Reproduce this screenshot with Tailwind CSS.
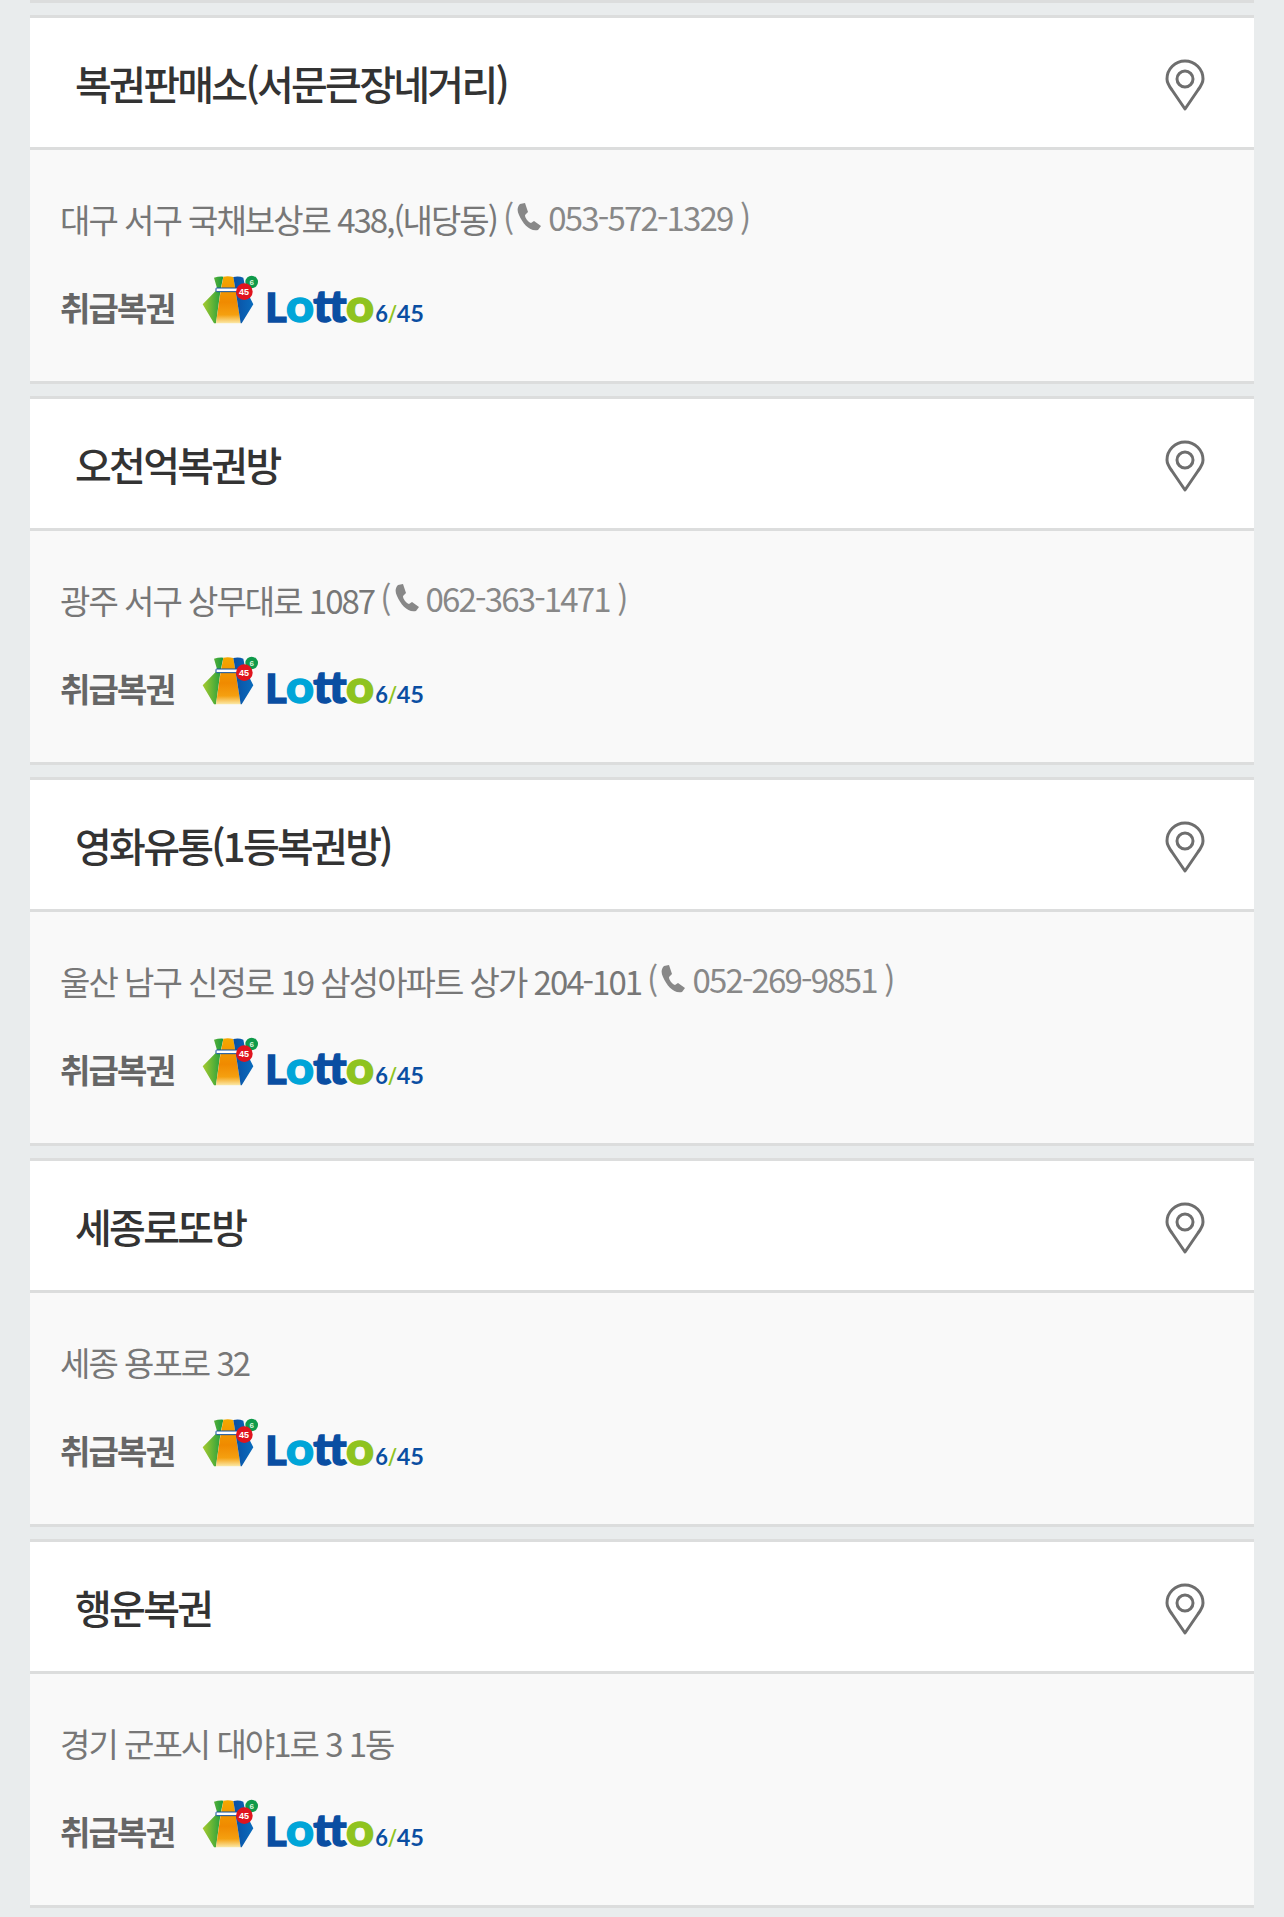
<!doctype html>
<html lang="ko">
<head>
<meta charset="utf-8">
<script src="https://cdn.jsdelivr.net/npm/@tailwindcss/browser@4"></script>
</head>
<body class="m-0 bg-[#e9eced] overflow-hidden">
<svg class="absolute w-0 h-0" aria-hidden="true">
  <defs>
    <linearGradient id="gg" x1="0" y1="0" x2="1" y2="0"><stop offset="0" stop-color="#a8cb2f"/><stop offset="1" stop-color="#169a3e"/></linearGradient>
    <linearGradient id="og" x1="0" y1="0" x2="0" y2="1"><stop offset="0" stop-color="#f4a800"/><stop offset=".55" stop-color="#f08a00"/><stop offset=".82" stop-color="#f5a010"/><stop offset="1" stop-color="#fbe9a8"/></linearGradient>
    <linearGradient id="bg" x1="0" y1="0" x2="1" y2="0"><stop offset="0" stop-color="#0b4fa3"/><stop offset="1" stop-color="#0a6cbd"/></linearGradient>
    <symbol id="logo" viewBox="0 0 750 240">
      <path d="M72 50 Q86 46 100 47 L92 85 L78 187 L72 187 L38 130 L82 85Z" fill="url(#gg)"/>
      <path d="M100 47 Q115 44 130 48 L137 90 L152 187 L78 187 L92 90Z" fill="url(#og)"/>
      <path d="M130 48 Q146 44 160 50 L167 85 L190 130 L155 187 L152 187 L137 90Z" fill="url(#bg)"/>
      <rect x="78" y="81" width="66" height="11" rx="2" fill="#fff" stroke="#0d4f9e" stroke-width="3"/>
      <circle cx="185" cy="63" r="19" fill="#0f9a4a"/>
      <text x="185" y="72" font-size="24" font-weight="700" fill="#d8f5dd" text-anchor="middle" font-family="'Liberation Sans',sans-serif">6</text>
      <circle cx="163" cy="92" r="25" fill="#e0141e"/>
      <text x="162" y="102" font-size="27" font-weight="700" fill="#fff" text-anchor="middle" font-family="'Liberation Sans',sans-serif">45</text>
      <g font-family="Lato,sans-serif" font-weight="900" stroke-width="4">
        <text x="226" y="183" font-size="120" fill="#0a4ea2" stroke="#0a4ea2" textLength="64" lengthAdjust="spacingAndGlyphs">L</text>
        <text x="288" y="183" font-size="138" fill="#00a5d8" stroke="#00a5d8" textLength="84" lengthAdjust="spacingAndGlyphs">o</text>
        <text x="370" y="183" font-size="130" fill="#0a4ea2" stroke="#0a4ea2" textLength="100" lengthAdjust="spacingAndGlyphs">tt</text>
        <text x="468" y="183" font-size="138" fill="#8fc31f" stroke="#8fc31f" textLength="84" lengthAdjust="spacingAndGlyphs">o</text>
      </g>
      <g font-family="Lato,sans-serif" font-weight="700" font-size="70">
        <text x="556" y="183" fill="#0a4ea2" textLength="38" lengthAdjust="spacingAndGlyphs">6</text>
        <text x="593" y="183" fill="#8fc31f" textLength="28" lengthAdjust="spacingAndGlyphs">/</text>
        <text x="620" y="183" fill="#0a4ea2" textLength="82" lengthAdjust="spacingAndGlyphs">45</text>
      </g>
    </symbol>
    <symbol id="pin" viewBox="0 0 40 52">
      <path d="M20 50 L7 31 C4 27 2 24 2 20 A18 18 0 0 1 38 20 C38 24 36 27 33 31Z" fill="none" stroke="#6e6e6e" stroke-width="3" stroke-linejoin="round"/>
      <circle cx="20" cy="20" r="8" fill="none" stroke="#6e6e6e" stroke-width="3"/>
    </symbol>
    <symbol id="tel" viewBox="0 0 25 28">
      <path d="M4 1 L9 0 L12 9 L9 12 C9 15 12 19 15 20 L18 18 L25 23 L22 27 C14 29 7 21 3 12 C1 8 1 4 4 1Z" fill="#888"/>
    </symbol>
  </defs>
</svg>

<div class="w-[1284px] h-[1917px] px-[30px] flex flex-col gap-3 font-['Noto_Sans_CJK_KR',sans-serif]">
  <div class="h-[3px] shrink-0 bg-[#dcdddd]"></div>

  <section class="shrink-0 border-y-[3px] border-[#dcdddd]">
    <div class="h-[129px] bg-white pl-[45px] pr-[49px] flex items-center justify-between">
      <h2 class="text-[40px] leading-none font-medium tracking-[-0.068em] text-[#333]">복권판매소(서문큰장네거리)</h2>
      <svg class="w-10 h-[52px] mt-[5px]"><use href="#pin"/></svg>
    </div>
    <div class="h-[234px] bg-[#f9f9f9] border-t-[3px] border-[#dcdddd] pl-[30px]">
      <p class="pt-[48px] h-[90px] flex items-center text-[33px] leading-none tracking-[-0.06em] text-[#777]">대구 서구 국채보상로 438,(내당동)<span class="ml-[6px] mb-1 flex items-center text-[#888] tracking-[-0.055em]">(<svg class="w-[25px] h-7 ml-[4px] mr-[7px]"><use href="#tel"/></svg>053-572-1329 )</span></p>
      <div class="flex items-center mt-[21px] h-[80px]">
        <span class="mt-[12px] text-[33px] leading-none font-bold tracking-[-0.055em] text-[#666]">취급복권</span>
        <svg class="w-[250px] h-20 ml-[16px]"><use href="#logo"/></svg>
      </div>
    </div>
  </section>

  <section class="shrink-0 border-y-[3px] border-[#dcdddd]">
    <div class="h-[129px] bg-white pl-[45px] pr-[49px] flex items-center justify-between">
      <h2 class="text-[40px] leading-none font-medium tracking-[-0.068em] text-[#333]">오천억복권방</h2>
      <svg class="w-10 h-[52px] mt-[5px]"><use href="#pin"/></svg>
    </div>
    <div class="h-[234px] bg-[#f9f9f9] border-t-[3px] border-[#dcdddd] pl-[30px]">
      <p class="pt-[48px] h-[90px] flex items-center text-[33px] leading-none tracking-[-0.06em] text-[#777]">광주 서구 상무대로 1087<span class="ml-[6px] mb-1 flex items-center text-[#888] tracking-[-0.055em]">(<svg class="w-[25px] h-7 ml-[4px] mr-[7px]"><use href="#tel"/></svg>062-363-1471 )</span></p>
      <div class="flex items-center mt-[21px] h-[80px]">
        <span class="mt-[12px] text-[33px] leading-none font-bold tracking-[-0.055em] text-[#666]">취급복권</span>
        <svg class="w-[250px] h-20 ml-[16px]"><use href="#logo"/></svg>
      </div>
    </div>
  </section>

  <section class="shrink-0 border-y-[3px] border-[#dcdddd]">
    <div class="h-[129px] bg-white pl-[45px] pr-[49px] flex items-center justify-between">
      <h2 class="text-[40px] leading-none font-medium tracking-[-0.068em] text-[#333]">영화유통(1등복권방)</h2>
      <svg class="w-10 h-[52px] mt-[5px]"><use href="#pin"/></svg>
    </div>
    <div class="h-[234px] bg-[#f9f9f9] border-t-[3px] border-[#dcdddd] pl-[30px]">
      <p class="pt-[48px] h-[90px] flex items-center text-[33px] leading-none tracking-[-0.06em] text-[#777]">울산 남구 신정로 19 삼성아파트 상가 204-101<span class="ml-[6px] mb-1 flex items-center text-[#888] tracking-[-0.055em]">(<svg class="w-[25px] h-7 ml-[4px] mr-[7px]"><use href="#tel"/></svg>052-269-9851 )</span></p>
      <div class="flex items-center mt-[21px] h-[80px]">
        <span class="mt-[12px] text-[33px] leading-none font-bold tracking-[-0.055em] text-[#666]">취급복권</span>
        <svg class="w-[250px] h-20 ml-[16px]"><use href="#logo"/></svg>
      </div>
    </div>
  </section>

  <section class="shrink-0 border-y-[3px] border-[#dcdddd]">
    <div class="h-[129px] bg-white pl-[45px] pr-[49px] flex items-center justify-between">
      <h2 class="text-[40px] leading-none font-medium tracking-[-0.068em] text-[#333]">세종로또방</h2>
      <svg class="w-10 h-[52px] mt-[5px]"><use href="#pin"/></svg>
    </div>
    <div class="h-[234px] bg-[#f9f9f9] border-t-[3px] border-[#dcdddd] pl-[30px]">
      <p class="pt-[48px] h-[90px] flex items-center text-[33px] leading-none tracking-[-0.06em] text-[#777]">세종 용포로 32</p>
      <div class="flex items-center mt-[21px] h-[80px]">
        <span class="mt-[12px] text-[33px] leading-none font-bold tracking-[-0.055em] text-[#666]">취급복권</span>
        <svg class="w-[250px] h-20 ml-[16px]"><use href="#logo"/></svg>
      </div>
    </div>
  </section>

  <section class="shrink-0 border-y-[3px] border-[#dcdddd]">
    <div class="h-[129px] bg-white pl-[45px] pr-[49px] flex items-center justify-between">
      <h2 class="text-[40px] leading-none font-medium tracking-[-0.068em] text-[#333]">행운복권</h2>
      <svg class="w-10 h-[52px] mt-[5px]"><use href="#pin"/></svg>
    </div>
    <div class="h-[234px] bg-[#f9f9f9] border-t-[3px] border-[#dcdddd] pl-[30px]">
      <p class="pt-[48px] h-[90px] flex items-center text-[33px] leading-none tracking-[-0.06em] text-[#777]">경기 군포시 대야1로 3 1동</p>
      <div class="flex items-center mt-[21px] h-[80px]">
        <span class="mt-[12px] text-[33px] leading-none font-bold tracking-[-0.055em] text-[#666]">취급복권</span>
        <svg class="w-[250px] h-20 ml-[16px]"><use href="#logo"/></svg>
      </div>
    </div>
  </section>
</div>
</body>
</html>
